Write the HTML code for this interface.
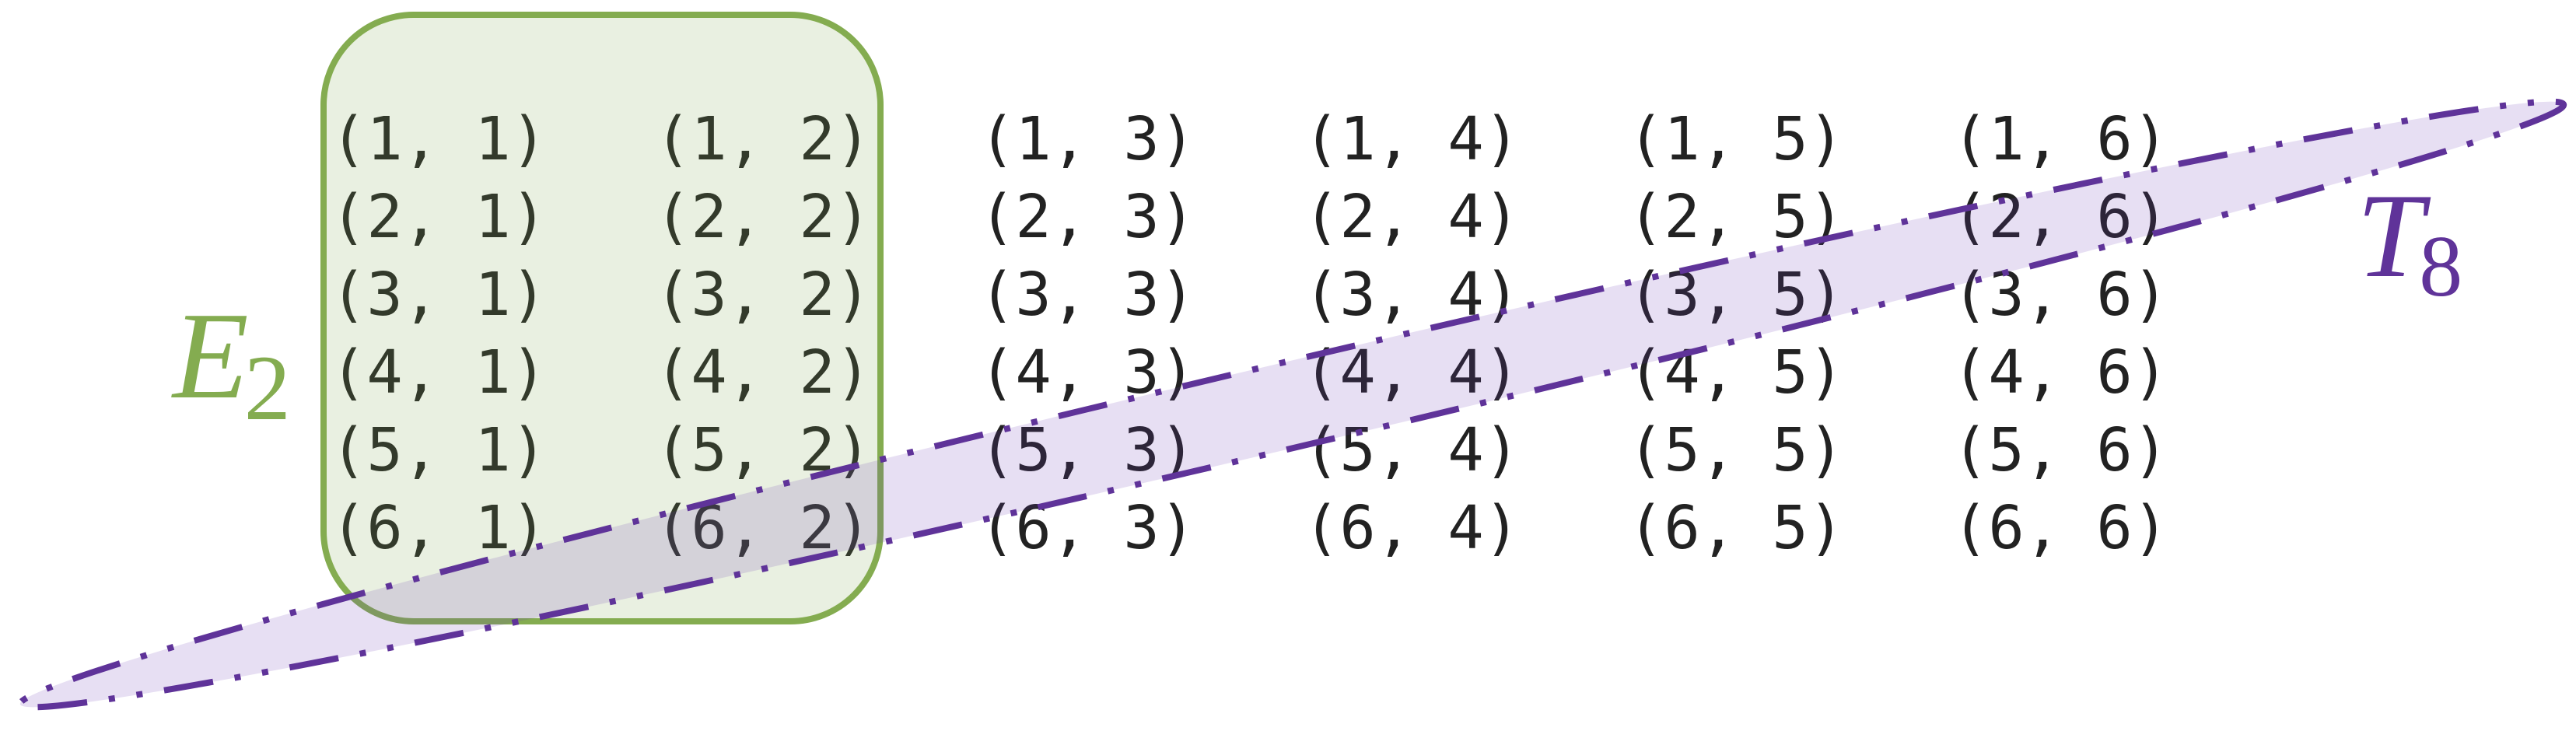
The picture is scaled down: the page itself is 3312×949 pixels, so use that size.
<!DOCTYPE html>
<html><head><meta charset="utf-8"><style>
html,body{margin:0;padding:0;background:#fff;}
svg{display:block;}
</style></head><body>
<svg width="3312" height="949" viewBox="0 0 3312 949" xmlns="http://www.w3.org/2000/svg">
<g font-family="'DejaVu Sans Mono','Liberation Mono',monospace" font-size="77" fill="#222">
<text x="425" y="205">(1, 1)</text><text x="842" y="205">(1, 2)</text><text x="1259" y="205">(1, 3)</text><text x="1676" y="205">(1, 4)</text><text x="2093" y="205">(1, 5)</text><text x="2510" y="205">(1, 6)</text>
<text x="425" y="305">(2, 1)</text><text x="842" y="305">(2, 2)</text><text x="1259" y="305">(2, 3)</text><text x="1676" y="305">(2, 4)</text><text x="2093" y="305">(2, 5)</text><text x="2510" y="305">(2, 6)</text>
<text x="425" y="405">(3, 1)</text><text x="842" y="405">(3, 2)</text><text x="1259" y="405">(3, 3)</text><text x="1676" y="405">(3, 4)</text><text x="2093" y="405">(3, 5)</text><text x="2510" y="405">(3, 6)</text>
<text x="425" y="505">(4, 1)</text><text x="842" y="505">(4, 2)</text><text x="1259" y="505">(4, 3)</text><text x="1676" y="505">(4, 4)</text><text x="2093" y="505">(4, 5)</text><text x="2510" y="505">(4, 6)</text>
<text x="425" y="605">(5, 1)</text><text x="842" y="605">(5, 2)</text><text x="1259" y="605">(5, 3)</text><text x="1676" y="605">(5, 4)</text><text x="2093" y="605">(5, 5)</text><text x="2510" y="605">(5, 6)</text>
<text x="425" y="705">(6, 1)</text><text x="842" y="705">(6, 2)</text><text x="1259" y="705">(6, 3)</text><text x="1676" y="705">(6, 4)</text><text x="2093" y="705">(6, 5)</text><text x="2510" y="705">(6, 6)</text>
</g>
<rect x="416" y="19" width="716" height="780" rx="116" ry="116" fill="rgb(130,170,85)" fill-opacity="0.176" stroke="#84ac50" stroke-width="8"/>
<ellipse cx="1661" cy="520" rx="1680" ry="55" transform="rotate(-13.27 1661 520)" fill="rgb(103,58,183)" fill-opacity="0.16" stroke="#5f3399" stroke-width="8" stroke-dasharray="64 28 8 28 8 28"/>
<g font-family="'Liberation Serif',serif" font-style="italic">
<text x="222" y="511" font-size="160" fill="#84ac50">E<tspan font-style="normal" font-size="120" dy="28" dx="-6">2</tspan></text>
<text x="3030" y="355" font-size="155" fill="#5f3399">T<tspan font-style="normal" font-size="112" dy="25" dx="-6">8</tspan></text>
</g>
</svg>
</body></html>
